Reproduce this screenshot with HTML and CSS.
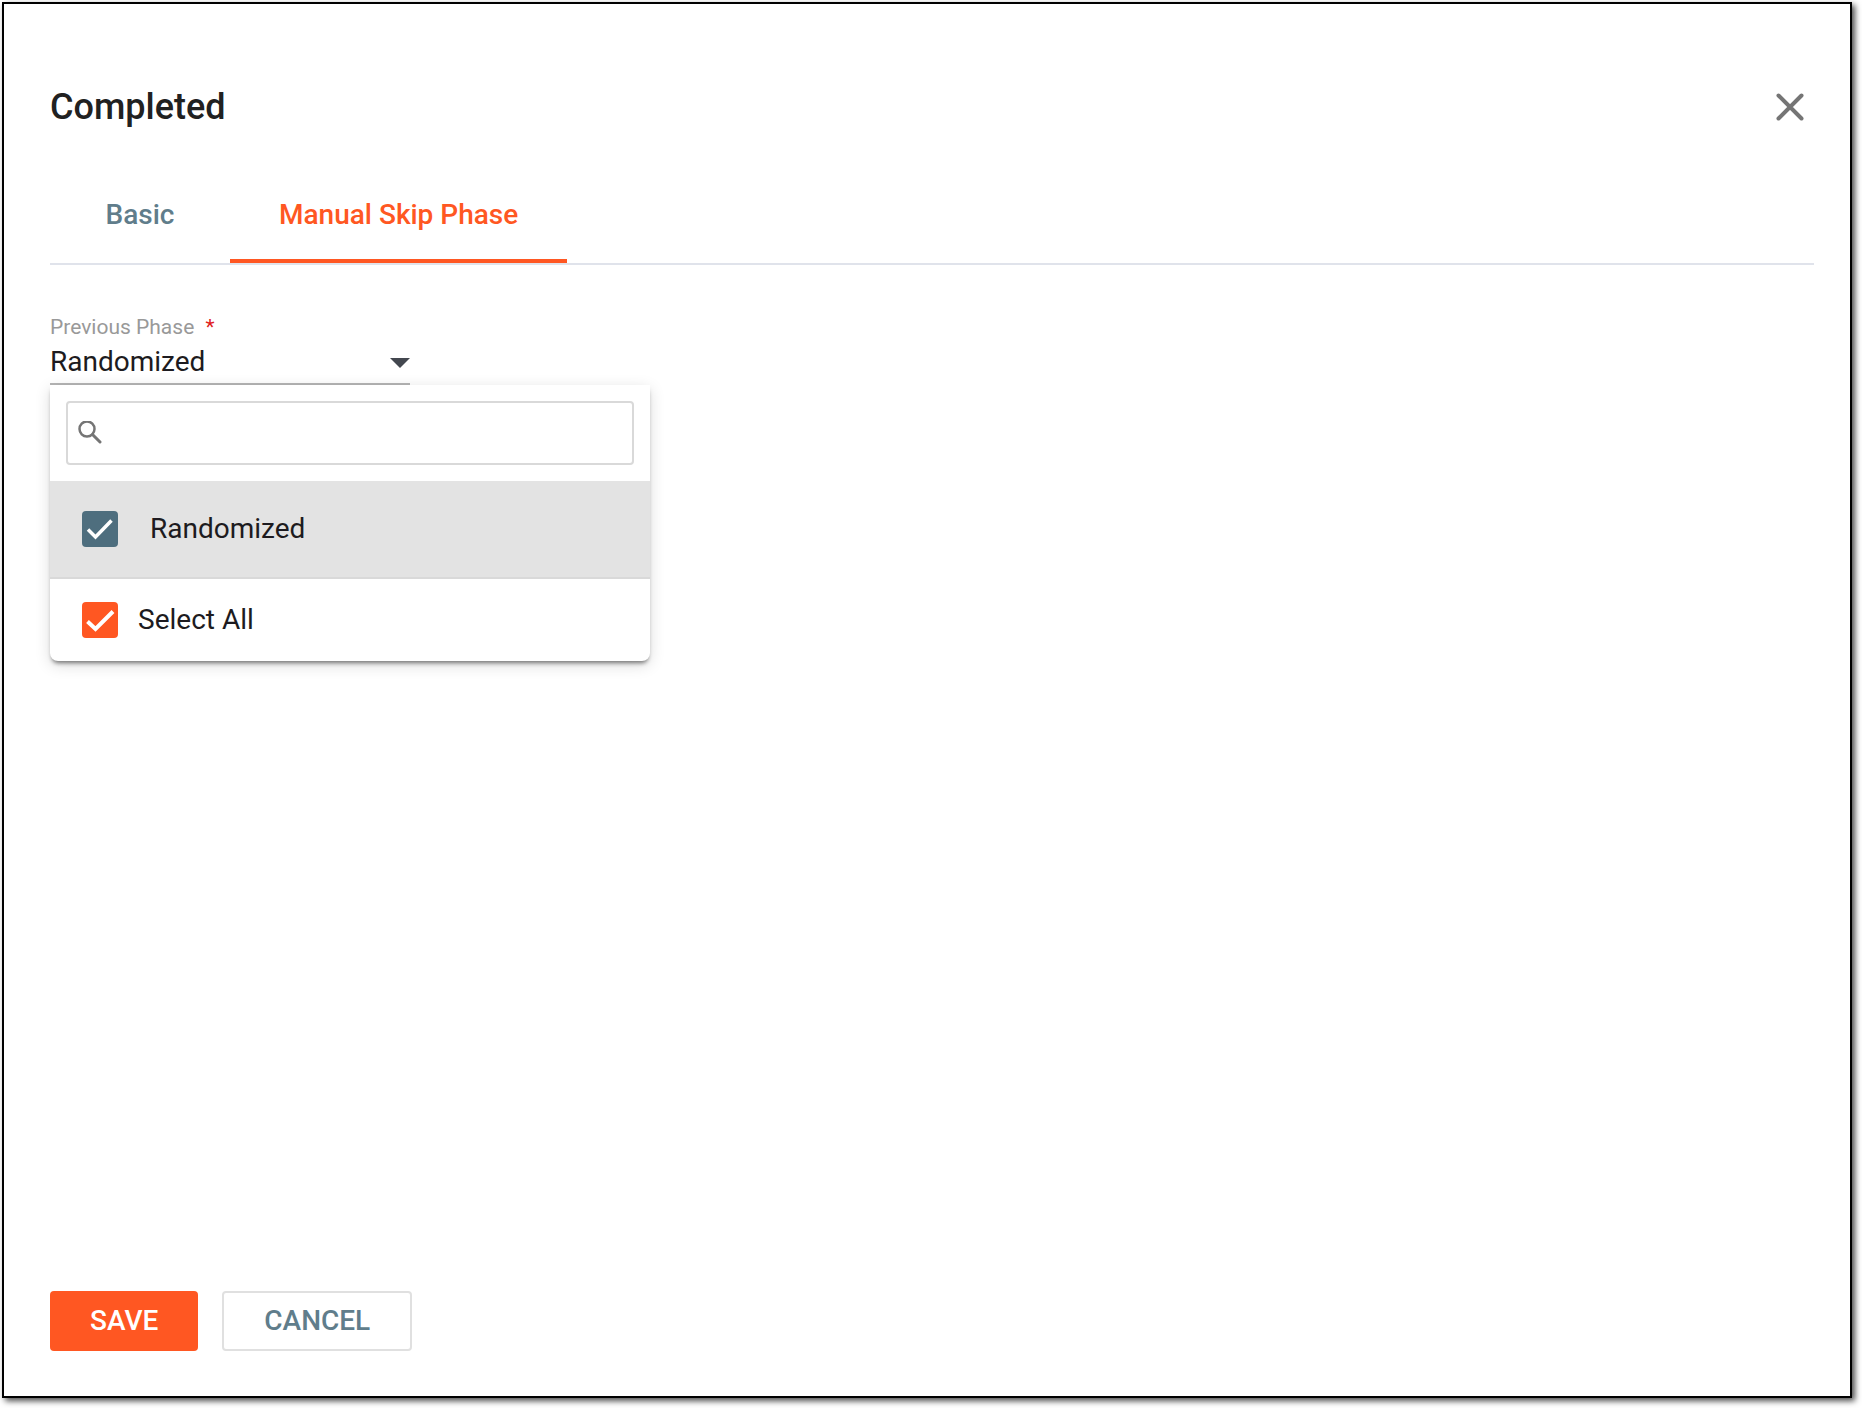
FILE: index.html
```
<!DOCTYPE html>
<html lang="en">

<head>
    <meta charset="UTF-8">
    <title>Completed</title>
    <link rel="stylesheet" href="styles.css">
</head>

<body>
    <div class="dialog" role="dialog" aria-labelledby="dialog-title">
        <header class="dialog-header">
            <h1 class="dialog-title" id="dialog-title">Completed</h1>
            <button type="button" class="close-btn" aria-label="Close">
                <svg width="28" height="28" viewBox="0 0 28 28">
                    <path d="M2.500 2.500L25.500 25.500M25.500 2.500L2.500 25.500" fill="none" stroke="#757575" stroke-width="4" stroke-linecap="round" />
                </svg>
            </button>
        </header>

        <div class="tabs" role="tablist">
            <button type="button" class="tab" role="tab" aria-selected="false">Basic</button>
            <button type="button" class="tab active" role="tab" aria-selected="true">Manual Skip Phase</button>
        </div>

        <div class="dialog-body">
            <div class="field">
                <label class="field-label" for="previous-phase">Previous Phase <span class="required">*</span></label>
                <div class="select-box">
                    <select id="previous-phase" class="select">
                        <option selected>Randomized</option>
                    </select>
                    <svg class="select-arrow" width="20" height="10" viewBox="0 0 20 10">
                        <path d="M0 0H20L10 10Z" fill="#43474f" />
                    </svg>
                </div>

                <!-- dropdown panel -->
                <div class="panel">
                    <div class="search">
                        <svg class="search-icon" width="24" height="24" viewBox="0 0 24 24" fill="none" stroke="#757575">
                            <circle cx="9" cy="8" r="7.500" stroke-width="2.500" />
                            <path d="M14.500 13.500L22 21" stroke-width="3" stroke-linecap="round" />
                        </svg>
                        <input type="text" class="search-input" aria-label="Search">
                    </div>
                    <label class="option selected">
                        <span class="check">
                            <input type="checkbox" class="check-input" checked>
                            <svg class="check-mark" width="36" height="36" viewBox="0 0 36 36">
                                <path d="M6 18.500L13.500 26L29.500 9.500" fill="none" stroke="#fff" stroke-width="3.500" />
                            </svg>
                        </span>
                        Randomized
                    </label>
                    <label class="option select-all">
                        <span class="check">
                            <input type="checkbox" class="check-input accent" checked>
                            <svg class="check-mark" width="36" height="36" viewBox="0 0 36 36">
                                <path d="M5.500 19.500L13.500 27L31 9.500" fill="none" stroke="#fff" stroke-width="4" />
                            </svg>
                        </span>
                        Select All
                    </label>
                </div>
            </div>
        </div>

        <footer class="dialog-footer">
            <button type="button" class="btn save-btn">SAVE</button>
            <button type="button" class="btn cancel-btn">CANCEL</button>
        </footer>
    </div>
</body>

</html>
```
FILE: styles.css
```
* {
    box-sizing: border-box;
}

body {
    font-family: Roboto, "Liberation Sans", sans-serif;
    font-size: 28px;
    line-height: 32px;
    color: #1d1b20;
    background-color: #fff;
    margin: 0;
    padding: 2px 10px 10px 2px;
    min-height: 100vh;
    display: flex;
}

button,
input,
select {
    font: inherit;
    color: inherit;
}

button {
    cursor: pointer;
}

.dialog {
    flex: 1;
    display: flex;
    flex-direction: column;
    padding: 83px 36px 45px 46px;
    background-color: #fff;
    border: 2px solid #000;
    box-shadow: 3px 3px 6px rgba(0, 0, 0, 0.7);
}

.dialog-header {
    display: flex;
    justify-content: space-between;
    align-items: center;
    padding-right: 10px;
}

.dialog-title {
    margin: 0;
    font-size: 36px;
    line-height: 40px;
    font-weight: 500;
    color: #212121;
}

.close-btn {
    display: flex;
    padding: 0;
    border: none;
    background: none;
}

/* Tabs */
.tabs {
    display: flex;
    margin-top: 40px;
    border-bottom: 2px solid #e0e3eb;
}

.tab {
    min-width: 180px;
    height: 96px;
    padding: 3px 49px 0;
    border: none;
    border-bottom: 4px solid transparent;
    background: none;
    font-weight: 500;
    color: #607d8b;
}

.tab.active {
    color: #ff5722;
    border-bottom-color: #ff5722;
}

.dialog-body {
    flex: 1;
    padding-top: 50px;
}

/* Select field */
.field {
    position: relative;
    width: 360px;
}

.field-label {
    display: block;
    font-size: 21px;
    line-height: 24px;
    color: #999;
}

.required {
    margin-left: 6px;
    color: #e02020;
}

.select-box {
    position: relative;
    border-bottom: 2px solid #b5b5b5;
}

.select {
    display: block;
    width: 100%;
    height: 44px;
    padding: 2px 0 0;
    border: none;
    background: none;
    appearance: none;
}

.select-arrow {
    position: absolute;
    top: 19px;
    right: 0;
    pointer-events: none;
}

/* Dropdown */
.panel {
    position: absolute;
    top: 100%;
    left: 0;
    width: 600px;
    overflow: hidden;
    background-color: #fff;
    border-radius: 0 0 8px 8px;
    box-shadow: 0 4px 4px -2px rgba(0, 0, 0, 0.5), 0 4px 16px rgba(0, 0, 0, 0.14);
}

.search {
    display: flex;
    align-items: center;
    gap: 10px;
    height: 64px;
    margin: 16px;
    padding: 0 10px;
    border: 2px solid #d9d9d9;
    border-radius: 4px;
}

.search-input {
    flex: 1;
    min-width: 0;
    padding: 0;
    border: none;
    outline: none;
    background: none;
}

.option {
    display: flex;
    align-items: center;
    gap: 32px;
    height: 98px;
    padding: 0 32px;
}

.option.selected {
    background-color: #e3e3e3;
    border-bottom: 2px solid #d9d9d9;
}

.option.select-all {
    gap: 20px;
    height: 82px;
}

.check {
    position: relative;
    width: 36px;
    height: 36px;
}

.check-input {
    display: block;
    width: 36px;
    height: 36px;
    margin: 0;
    border-radius: 4px;
    appearance: none;
}

.check-input:checked {
    background-color: #4e6e7e;
}

.check-input.accent:checked {
    background-color: #ff5722;
}

.check-mark {
    position: absolute;
    top: 0;
    left: 0;
    pointer-events: none;
}

/* Footer */
.dialog-footer {
    display: flex;
    gap: 24px;
}

.btn {
    height: 60px;
    padding: 0 40px;
    border: none;
    border-radius: 4px;
    font-weight: 500;
}

.save-btn {
    background-color: #ff5722;
    color: #fff;
}

.cancel-btn {
    background-color: #fff;
    border: 2px solid #e0e0e0;
    color: #607d8b;
}
```
